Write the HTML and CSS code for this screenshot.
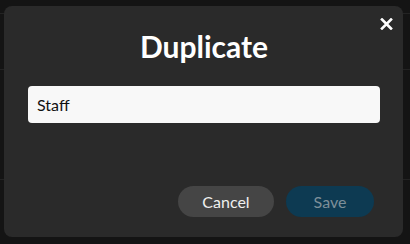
FILE: index.html
```html
<!DOCTYPE html>
<html>
<head>
<meta charset="utf-8">
<link rel="stylesheet" href="styles.css">
</head>
<body>
<div class="backdrop">
  <div class="row r1"></div>
  <div class="row r2"></div>
  <div class="row r3"></div>
</div>
<div class="modal">
  <button class="close" aria-label="Close">
    <svg width="13" height="12" viewBox="0 0 13 12"><path d="M2 1.5L11 10.5M11 1.5L2 10.5" stroke="#fff" stroke-width="2.6" stroke-linecap="square"/></svg>
  </button>
  <h1 class="title">Duplicate</h1>
  <div class="field"><input class="input" type="text" value="Staff"></div>
  <div class="actions">
    <button class="btn cancel">Cancel</button>
    <button class="btn save">Save</button>
  </div>
</div>
</body>
</html>
```

FILE: styles.css
```css
html, body {
  margin: 0;
  padding: 0;
  width: 410px;
  height: 244px;
  overflow: hidden;
  background: #141414;
  font-family: Lato, "Noto Sans", sans-serif;
}
.backdrop {
  position: absolute;
  inset: 0;
}
.row {
  position: absolute;
  left: 0;
  right: 0;
  height: 1px;
  background: #232323;
}
.r1 { top: 13px; }
.r2 { top: 69px; }
.r3 { top: 179px; }
.modal {
  position: absolute;
  left: 4px;
  top: 6px;
  width: 399px;
  height: 231px;
  box-sizing: border-box;
  background: #2a2a2a;
  border-radius: 8px;
  padding: 22px 23px 20px 24px;
  display: flex;
  flex-direction: column;
}
.close {
  position: absolute;
  top: 11px;
  right: 10px;
  width: 14px;
  height: 14px;
  padding: 0;
  border: 0;
  background: transparent;
  display: flex;
  align-items: center;
  justify-content: center;
}
.title {
  margin: 0;
  text-align: center;
  color: #fff;
  font-size: 30px;
  font-weight: 700;
  line-height: 36px;
}
.field {
  margin-top: 22px;
}
.input {
  display: block;
  width: 100%;
  box-sizing: border-box;
  height: 37px;
  border: 0;
  border-radius: 4px;
  background: #f8f8f8;
  padding: 0 9px;
  font-family: Lato, "Noto Sans", sans-serif;
  font-size: 16px;
  color: #111;
  outline: none;
}
.actions {
  margin-top: auto;
  display: flex;
  justify-content: flex-end;
  gap: 12px;
  padding-right: 6px;
}
.btn {
  height: 31px;
  border: 0;
  border-radius: 16px;
  font-family: Lato, "Noto Sans", sans-serif;
  font-size: 16px;
  padding: 0;
}
.cancel {
  width: 96px;
  background: #454545;
  color: #f0f0f0;
}
.save {
  width: 88px;
  background: #0d3a52;
  color: #7d8f99;
}
```
